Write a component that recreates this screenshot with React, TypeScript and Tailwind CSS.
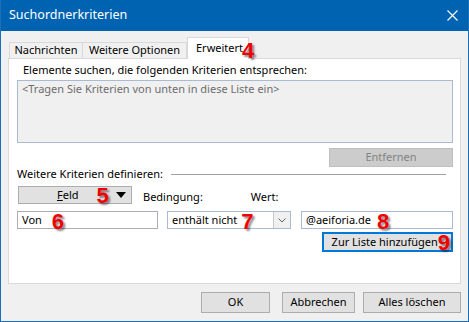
import React from "react";

const Num = ({ n }: { n: string }) => (
  <span className="font-['Liberation_Sans',sans-serif] text-[22px] leading-none font-bold text-[#f00000] [text-shadow:2px_2px_2px_rgba(0,0,0,0.45)]">
    {n}
  </span>
);

const Btn = ({
  children,
  className = "",
}: {
  children: React.ReactNode;
  className?: string;
}) => (
  <div
    className={`flex items-center justify-center border border-[#adadad] bg-[#e1e1e1] text-black ${className}`}
  >
    {children}
  </div>
);

export default function App() {
  return (
    <div className="flex h-[322px] w-[469px] flex-col border border-t-0 border-[#1a6fb8] bg-[#0063b1] font-['Noto_Sans',sans-serif] text-[11px] whitespace-nowrap text-black">
      {/* title bar */}
      <div className="flex h-[31px] items-center justify-between pl-[8px] pr-[10px] text-[12.5px] text-white">
        <span>Suchordnerkriterien</span>
        <svg width="11" height="11" viewBox="0 0 11 11">
          <path d="M0.5 0.5 L10.5 10.5 M10.5 0.5 L0.5 10.5" stroke="white" strokeWidth="1.1" />
        </svg>
      </div>

      <div className="flex flex-1 flex-col bg-[#f0f0f0]">
        {/* tabs */}
        <div className="relative z-10 -mb-px mt-[6px] ml-[8px] flex h-[22px] items-end">
          <div className="flex h-[17px] w-[74px] items-center justify-center border border-[#d9d9d9] bg-[#f0f0f0]">
            Nachrichten
          </div>
          <div className="flex h-[17px] w-[104px] items-center justify-center border border-l-0 border-[#d9d9d9] bg-[#f0f0f0]">
            Weitere Optionen
          </div>
          <div className="flex h-[22px] w-[62px] items-start border border-b-0 border-[#d9d9d9] bg-white pl-[8px] pt-[2px]">
            <span>Erweitert</span>
            <span className="-ml-[1px]">
              <Num n="4" />
            </span>
          </div>
        </div>

        {/* panel */}
        <div className="ml-[7px] flex h-[226px] w-[453px] flex-col border border-[#d9d9d9] bg-white">
          <div className="mt-[4px] pl-[14px] leading-[14px]">
            Elemente suchen, die folgenden Kriterien entsprechen:
          </div>
          <div className="ml-[8px] mt-[3px] h-[63px] w-[436px] border border-[#a9bbd3] bg-[#f0f0f0] pl-[4px] pt-[1px] leading-[14px] text-[#6d6d6d]">
            &lt;Tragen Sie Kriterien von unten in diese Liste ein&gt;
          </div>
          <div className="mr-[7px] mt-[5px] flex justify-end">
            <div className="flex h-[19px] w-[124px] items-center justify-center border border-[#bfbfbf] bg-[#cccccc] text-[#838383]">
              Entfernen
            </div>
          </div>
          <div className="mt-0 flex items-center pl-[8px] pr-[14px] leading-[14px]">
            <span>Weitere Kriterien definieren:</span>
            <div className="ml-[8px] h-px flex-1 bg-[#a0a0a0]" />
          </div>
          <div className="mt-[5px] flex items-end pl-[9px]">
            <Btn className="h-[18px] w-[114px] justify-start pl-[38px]">
              <span>
                <span className="underline">F</span>eld
              </span>
              <span className="ml-[18px] mt-[3px]">
                <Num n="5" />
              </span>
              <svg className="ml-[7px]" width="10" height="6" viewBox="0 0 10 6">
                <path d="M0 0 H10 L5 6 Z" fill="black" />
              </svg>
            </Btn>
            <span className="ml-[11px] leading-[14px]">Bedingung:</span>
            <span className="ml-[48px] leading-[14px]">Wert:</span>
          </div>
          <div className="mt-[7px] flex pl-[8px]">
            <div className="flex h-[18px] w-[141px] items-center border border-[#abadb3] bg-white pl-[4px]">
              <span>Von</span>
              <span className="ml-[10px] mt-[4px]">
                <Num n="6" />
              </span>
            </div>
            <div className="ml-[9px] flex h-[18px] w-[124px] items-center border border-[#a9bbd3] bg-white">
              <span className="pl-[4px]">enthält nicht</span>
              <span className="ml-[4px] mt-[4px]">
                <Num n="7" />
              </span>
              <div className="ml-auto flex h-full w-[17px] items-center justify-center border-l border-[#c8c8c8] bg-[#f0f0f0]">
                <svg width="8" height="5" viewBox="0 0 8 5">
                  <path d="M0.5 0.5 L4 4 L7.5 0.5" stroke="#606060" fill="none" />
                </svg>
              </div>
            </div>
            <div className="ml-[10px] flex h-[18px] w-[152px] items-center border border-[#a9bbd3] bg-white pl-[4px]">
              <span>@aeiforia.de</span>
              <span className="ml-[6px] mt-[4px]">
                <Num n="8" />
              </span>
            </div>
          </div>
          <div className="mr-[7px] mt-[3px] flex justify-end">
            <div className="flex h-[20px] w-[131px] items-center justify-end border-2 border-[#0078d7] bg-[#e1e1e1] pr-[1px]">
              <span>Zur Liste hinzufügen</span>
              <span className="mt-[2px]">
                <Num n="9" />
              </span>
            </div>
          </div>
        </div>

        {/* footer buttons */}
        <div className="mr-[7px] mt-[8px] flex justify-end">
          <Btn className="h-[21px] w-[69px]">OK</Btn>
          <Btn className="ml-[12px] h-[21px] w-[73px]">Abbrechen</Btn>
          <Btn className="ml-[8px] h-[21px] w-[98px]">Alles löschen</Btn>
        </div>
      </div>
    </div>
  );
}
